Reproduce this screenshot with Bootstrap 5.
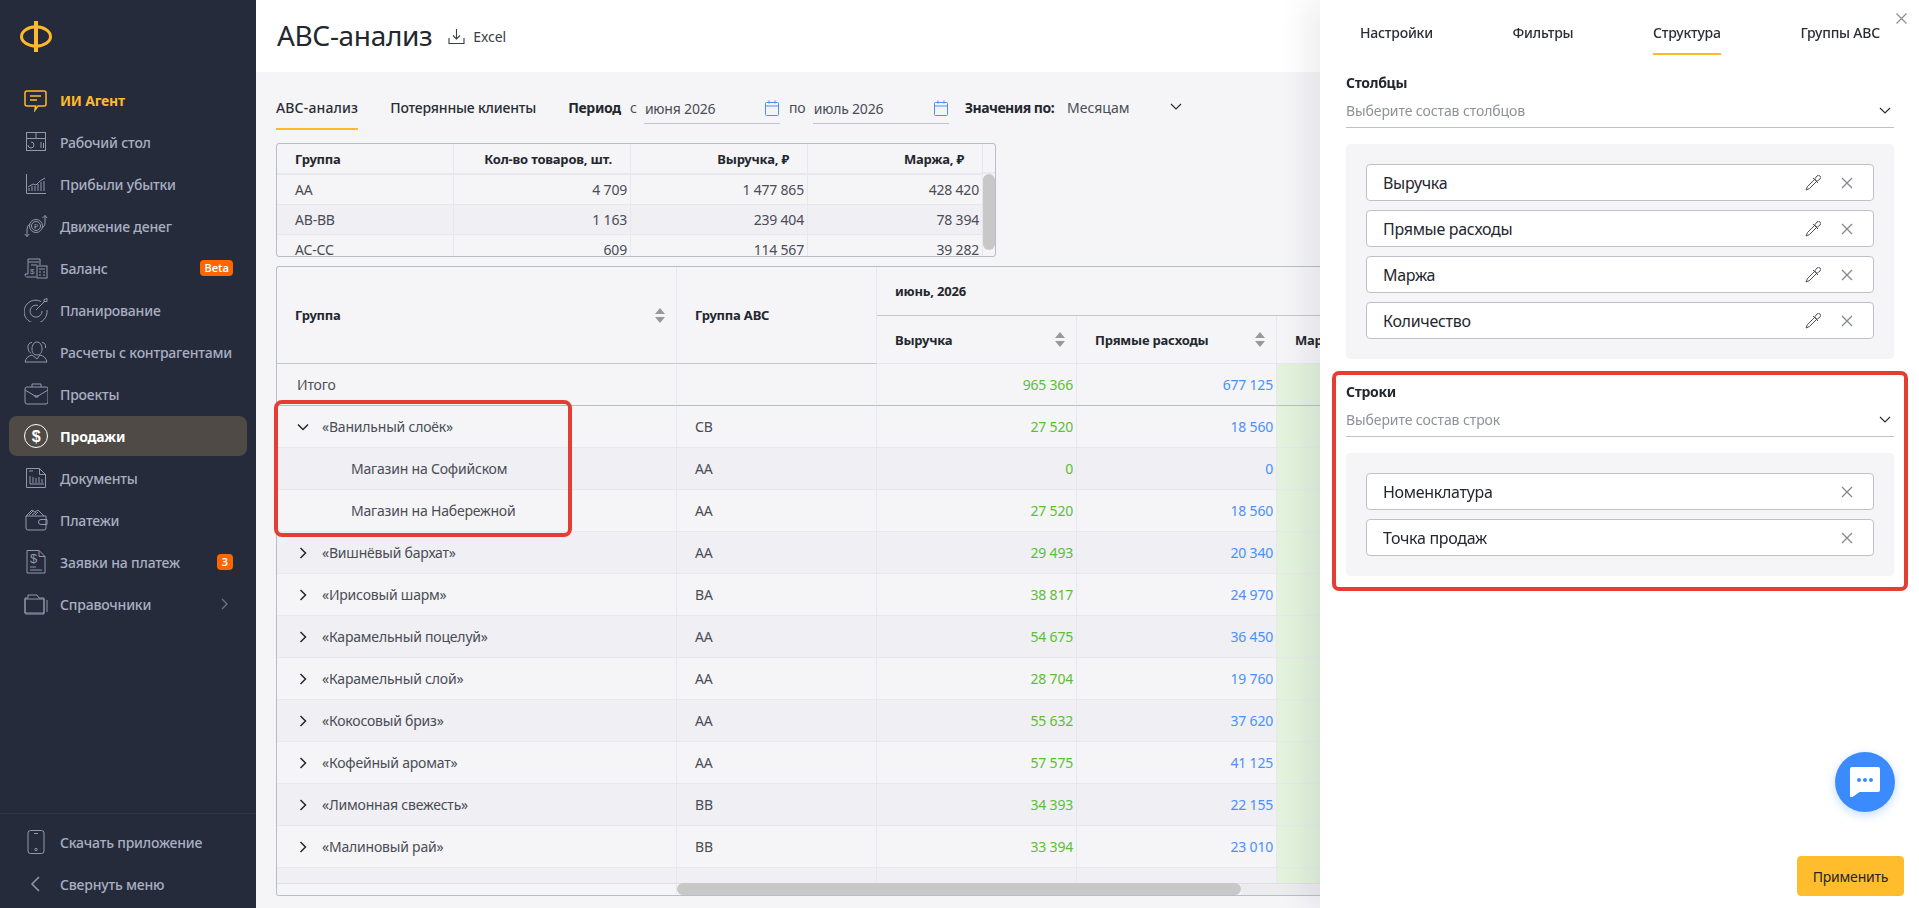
<!DOCTYPE html>
<html lang="ru">
<head>
    <meta charset="UTF-8">
    <meta name="viewport" content="width=device-width, initial-scale=1.0">
    <title>ABC-анализ</title>
    <link href="https://cdn.jsdelivr.net/npm/bootstrap@5.3.0/dist/css/bootstrap.min.css" rel="stylesheet">
    <style>
        html, body { height: 100%; }
        body {
            font-family: "Noto Sans", Roboto, sans-serif;
            font-size: 14px;
            color: #24272e;
            background: #f5f5f8;
            overflow: hidden;
        }
        /* sidebar */
        .side {
            width: 256px;
            height: 908px;
            background: #252b3a;
            flex: none;
        }
        .side-logo { height: 80px; padding: 21px 0 0 20px; }
        .side-list { padding: 0 9px; }
        .side-link {
            height: 40px;
            margin-bottom: 2px;
            padding: 0 14px 0 15px;
            border-radius: 8px;
            color: #a9afc2;
            font-weight: 500;
            letter-spacing: -.2px;
            text-decoration: none;
        }
        .side-link.agent { color: #ffb92a; font-weight: 700; }
        .side-link.active { background: #4f4a45; color: #fff; font-weight: 700; }
        .side-ico { width: 24px; height: 24px; margin-right: 12px; flex: none; fill: none; stroke: #9299ab; stroke-width: 1; }
        .side-link.agent .side-ico { stroke: #ffb92a; stroke-width: 1.5; }
        .side-link.active .side-ico { stroke: #fff; }
        .side-ico text { font-family: "Liberation Sans", sans-serif; stroke: none; fill: #9299ab; }
        .side-link.active .side-ico text { fill: #fff; }
        .side-tag {
            margin-left: auto;
            background: #ff6600;
            color: #fff;
            height: 16px;
            min-width: 16px;
            padding: 0 4px;
            border-radius: 4px;
            font-size: 11px;
            font-weight: 600;
            line-height: 16px;
            letter-spacing: 0;
            text-align: center;
        }
        .side-foot { margin-top: auto; padding-top: 8px; padding-bottom: 2px; border-top: 1px solid #30364a; }
        /* main part */
        .work { flex: 1; min-width: 0; height: 908px; }
        .work-head { height: 72px; background: #fff; padding-left: 21px; }
        .work-head h1 { font-size: 28px; font-weight: 400; margin: 0 16px 0 0; letter-spacing: -.35px; }
        .excel-link { color: #3a3d45; font-size: 14px; letter-spacing: -.1px; }
        .work-body { padding: 16px 0 0 20px; }
        .tab-line { height: 42px; }
        .tab-item {
            padding: 10px 0;
            height: 42px;
            line-height: 20px;
            border-bottom: 2px solid transparent;
            margin-right: 32px;
            font-weight: 500;
            letter-spacing: -.18px;
            color: #2a2d35;
        }
        .tab-item.on { border-bottom-color: #ffb92a; letter-spacing: .15px; }
        .fld-label { margin-top: 10px; line-height: 20px; font-weight: 700; letter-spacing: -.3px; }
        .fld-label.by-label { margin-left: 16px; letter-spacing: -.5px; }
        .fld-word { margin: 10px 7px 0 9px; line-height: 20px; color: #4a4d55; }
        .fld-word.by-value { margin-left: 13px; }
        .by-chev { margin: 15px 0 0 34px; }
        .fld-date {
            width: 136px;
            height: 31px;
            margin-top: 5px;
            border-bottom: 1px solid #c2c4cd;
            padding: 0 1px;
            color: #4a4d55;
            letter-spacing: -.2px;
        }
        .frame {
            border: 1px solid #b9bdca;
            border-radius: 3px;
            overflow: hidden;
        }
        .mini-frame { width: 720px; height: 114px; margin-top: 13px; }
        .vbar { width: 13px; flex: none; border-left: 1px solid #e6e7ec; }
        .vbar-top { height: 30px; border-bottom: 2px solid #e9eaef; }
        .vbar-thumb { width: 12px; height: 76px; background: #c8c8c8; border-radius: 6px; }
        .grid-holder { position: relative; margin-top: 9px; }
        .grid-frame { height: 630px; border-right: 0; border-radius: 3px 0 0 3px; }
        .grid-clip { flex: 1; overflow: hidden; min-height: 0; }
        .abc-grid {
            table-layout: fixed;
            border-collapse: separate;
            border-spacing: 0;
            margin: 0;
            --bs-table-bg: transparent;
        }
        .abc-grid > :not(caption) > * > * {
            padding: 0 3px 0 18px;
            border-bottom: 1px solid #e7e8ed;
            border-right: 1px solid #e7e8ed;
            color: #4a4d55;
            background: transparent;
            box-shadow: none;
            vertical-align: middle;
            line-height: 18px;
            letter-spacing: -.2px;
        }
        .abc-grid > thead > tr > th { color: #24272e; font-size: 13px; font-weight: 700; padding-right: 12px; letter-spacing: -.2px; }
        .abc-grid > tbody > tr > .num { text-align: right; }
        .abc-grid > thead > tr > .num { text-align: right; padding-right: 18px; }
        .big-grid > tbody > tr:nth-child(odd) > * { background: #efeff4; }
        .mini-grid > tbody > tr:nth-child(even) > * { background: #efeff4; }
        .big-grid > tbody > tr.sum-row > * { background: transparent; }
        .abc-grid > tbody > tr > td.pos { color: #5ac034; }
        .abc-grid > tbody > tr > td.neg { color: #4a90ff; }
        .big-grid > tbody > tr > td.mrg { background: #e2f2dc; }
        .big-grid td { height: 42px; }
        .big-grid tr.sum-row td { border-bottom: 1px solid #b9bdca; }
        .big-grid tr.sum-row td:first-child { padding-left: 20px; }
        .big-grid tr.first-head th { height: 49px; border-bottom: 1px solid #c4c6cf; }
        .big-grid tr.second-head th { height: 48px; }
        .big-grid th.group-head { border-bottom: 1px solid #e7e8ed; }
        .sort-wrap { display: flex; align-items: center; justify-content: space-between; }
        .sort-mark { width: 10px; height: 15px; flex: none; fill: #999; margin-right: -1px; }
        .row-open { width: 12px; height: 12px; margin: 0 13px 0 0; fill: none; stroke: #24272e; stroke-width: 1.5; vertical-align: -1px; }
        .row-name { padding-left: 2px; }
        .child-name { padding-left: 56px; }
        .mini-grid th { height: 31px; border-bottom-width: 2px !important; }
        .mini-grid td { height: 30px; }
        .hbar { height: 12px; flex: none; background: #f5f5f8; border-top: 1px solid #dfe0e6; }
        .hbar-gap { width: 400px; flex: none; border-right: 1px solid #e7e8ed; }
        .hbar-thumb { width: 564px; height: 12px; flex: none; margin-top: -1px; background: #c8c8c8; border-radius: 6px; }
        .hbar-rest { flex: 1; background: #ececef; }
        .mark-box { position: absolute; border: 4px solid #e53d33; border-radius: 8px; pointer-events: none; left: -2px; top: 134px; width: 298px; height: 137px; }
        /* right panel */
        .sheet {
            position: fixed;
            top: 0;
            right: 0;
            bottom: 0;
            width: 599px;
            background: #fff;
            box-shadow: -12px 0 30px rgba(30, 30, 50, .08);
            padding: 0 25px 0 26px;
        }
        .sheet-close { position: absolute; top: 13px; right: 12px; width: 11px; height: 11px; stroke: #8b8e97; stroke-width: 1.2; }
        .sheet-tabs { padding: 0 14px; }
        .sheet-tab { padding: 23px 0 10px; height: 55px; line-height: 20px; border-bottom: 2px solid transparent; font-weight: 500; letter-spacing: -.22px; color: #2a2d35; }
        .sheet-tab.on { border-bottom-color: #ffb92a; }
        .sect-title { font-weight: 700; line-height: 20px; letter-spacing: -.3px; margin-top: 18px; }
        .pick-line { height: 35px; padding: 1px 3px 0 0; border-bottom: 1px solid #bfc1c9; color: #8f9199; letter-spacing: -.1px; }
        .pick-chev { width: 12px; height: 8px; fill: none; stroke: #2b2e36; stroke-width: 1.2; }
        .slot-box { margin-top: 16px; padding: 20px 20px 11px; background: #f5f5f7; border-radius: 4px; }
        .slot-item {
            height: 37px;
            margin-bottom: 9px;
            padding: 0 20px 0 16px;
            background: #fff;
            border: 1px solid #bfc1c9;
            border-radius: 4px;
            font-size: 16px;
            color: #24272e;
            letter-spacing: -.3px;
        }
        .slot-x { width: 12px; height: 12px; margin-left: 20px; stroke: #85888f; stroke-width: 1.3; flex: none; }
        .slot-pen { width: 16px; height: 16px; fill: none; stroke: #4c4f57; stroke-width: 1; flex: none; }
        .mark-zone { margin: 12px -14px 0; padding: 7px 10px 11px; border: 4px solid #e53d33; border-radius: 7px; }
        .mark-zone .sect-title { margin-top: 0; }
        .sheet-foot { margin-top: auto; padding-bottom: 12px; margin-right: -10px; }
        .apply-btn { width: 107px; height: 40px; background: #ffbd2e; border-color: #ffbd2e; color: #24272e; font-size: 14px; letter-spacing: -.2px; border-radius: 4px; padding: 0; }
        .chat-fab {
            position: fixed;
            top: 752px;
            right: 24px;
            width: 60px;
            height: 60px;
            background: #3b8bff;
            border-radius: 50%;
            box-shadow: 0 3px 10px rgba(59, 139, 255, .3);
        }
    </style>
</head>
<body>
<div class="d-flex">

    <!-- Sidebar -->
    <nav class="side d-flex flex-column">
        <div class="side-logo">
            <svg width="32" height="31" viewBox="0 0 32 31"><ellipse cx="16" cy="15.500" rx="14.500" ry="9.700" fill="none" stroke="#ffb92a" stroke-width="3"/><rect x="14" y="0" width="4" height="31" fill="#ffb92a"/></svg>
        </div>
        <div class="side-list">
            <a class="side-link agent d-flex align-items-center" href="#">
                <svg class="side-ico" viewBox="0 0 24 24"><path d="M3 3h17a2 2 0 0 1 2 2v11a2 2 0 0 1-2 2h-6l-3 4 .5-4H3a2 2 0 0 1-2-2V5a2 2 0 0 1 2-2z"/><path d="M6 8h11M6 12h7"/></svg>ИИ Агент</a>
            <a class="side-link d-flex align-items-center" href="#">
                <svg class="side-ico" viewBox="0 0 24 24"><rect x="2.500" y="2.500" width="19" height="18"/><path d="M2.500 8.500h19M12 2.500v6M17 12v6M19.500 13v5M7 12a3 3 0 1 1-3 3"/></svg>Рабочий стол</a>
            <a class="side-link d-flex align-items-center" href="#">
                <svg class="side-ico" viewBox="0 0 24 24"><path d="M2.500 2v19.500H22M5 19v-3M8 19v-5M11 19v-5M14 19v-7M17 19v-9M20 19V9M4 15l5-3 3 1 4-4 5-3"/></svg>Прибыли убытки</a>
            <a class="side-link d-flex align-items-center" href="#">
                <svg class="side-ico" viewBox="0 0 24 24"><circle cx="12" cy="12" r="6.500"/><circle cx="12" cy="12" r="4.500"/><text x="12" y="14.500" font-size="7" text-anchor="middle">₽</text><path d="M21 8V1.500M18.500 4 21 1.500 23 4M3 16v6.500M.8 20 3 22.500 5.300 20M3 16c0-3 1-5 3-6M21 8c0 3-1 5-3 6"/></svg>Движение денег</a>
            <a class="side-link d-flex align-items-center justify-content-start" href="#">
                <svg class="side-ico" viewBox="0 0 24 24"><path d="M4 3h12v6M4 3v15H1c0 2 1 3 2 3h9M4 6h11M7 9h6"/><text x="8" y="18" font-size="8" text-anchor="middle">$</text><rect x="13" y="10" width="10" height="12"/><path d="M15 13h6M15 16h2M19 16h2M15 19h2M19 19h2"/></svg>Баланс<span class="side-tag">Beta</span></a>
            <a class="side-link d-flex align-items-center" href="#">
                <svg class="side-ico" viewBox="0 0 24 24"><path d="M17 3.500A11.500 11.500 0 1 0 23 12M14 7.500A6 6 0 1 0 18 13"/><path d="M12 12l8-8M20 4V1.500l3-1v3h-3"/></svg>Планирование</a>
            <a class="side-link d-flex align-items-center" href="#">
                <svg class="side-ico" viewBox="0 0 24 24"><path d="M8 9c0-4 2-7 5-7s5 3 5 7-2 6-5 6-5-2-5-6zM8 15c-4 1-6 3-7 7h22c-1-4-3-6-7-7M8 15l5 4 3-4M8 2.500C5 2.500 3.500 5 4 8s1 4 3 5M18 2.500c3 0 4 2.500 3.500 5.500"/></svg>Расчеты с контрагентами</a>
            <a class="side-link d-flex align-items-center" href="#">
                <svg class="side-ico" viewBox="0 0 24 24"><rect x="1" y="5" width="23" height="17" rx="2"/><path d="M8 5V2h9v3M1 8l10 6h3l10-6M11 13v2h3v-2"/></svg>Проекты</a>
            <a class="side-link active d-flex align-items-center" href="#">
                <svg class="side-ico" viewBox="0 0 24 24"><circle cx="12" cy="12" r="11.500"/><text x="12" y="17.500" font-size="16" text-anchor="middle">$</text></svg>Продажи</a>
            <a class="side-link d-flex align-items-center" href="#">
                <svg class="side-ico" viewBox="0 0 24 24"><path d="M2.500 2.500h13l6 6v13h-19zM15.500 2.500v6h6M5 5h4M6 10v8h14M9 17V11M12 17V12M15 17V11M18 17V13"/></svg>Документы</a>
            <a class="side-link d-flex align-items-center" href="#">
                <svg class="side-ico" viewBox="0 0 24 24"><path d="M2 8v12a2 2 0 0 0 2 2h16a2 2 0 0 0 2-2V8H2zM22 11.500h-5a2 2 0 0 0 0 5h6v-5zM2 8l6-6 3 2 3-2 6 6M5 7l4-4M8 7l4-3M11 7l3-3"/></svg>Платежи</a>
            <a class="side-link d-flex align-items-center" href="#">
                <svg class="side-ico" viewBox="0 0 24 24"><path d="M3 .5h12l6 6V23H3zM15 .5v6h6M6 17h6M6 20h12"/><text x="9.500" y="13" font-size="13" text-anchor="middle">$</text></svg>Заявки на платеж<span class="side-tag">3</span></a>
            <a class="side-link d-flex align-items-center" href="#">
                <svg class="side-ico" viewBox="0 0 24 24"><path d="M1 21V6h3V3h9l2 3h5v15zM1 7h19v15H2a1 1 0 0 1-1-1zM23 8v12"/></svg>Справочники
                <svg class="ms-auto me-1" width="8" height="12" viewBox="0 0 8 12" fill="none" stroke="#70778a" stroke-width="1.200"><path d="M1 1l5 5-5 5"/></svg></a>
        </div>
        <div class="side-foot side-list">
            <a class="side-link d-flex align-items-center" href="#">
                <svg class="side-ico" viewBox="0 0 24 24"><rect x="4" y="0.500" width="16" height="23" rx="2.500"/><path d="M10 3.500h4"/><circle cx="12" cy="19.500" r="1.200"/></svg>Скачать приложение</a>
            <a class="side-link d-flex align-items-center" href="#">
                <svg class="side-ico" viewBox="0 0 24 24" style="stroke-width:1.500"><path d="M15 5l-7 7 7 7"/></svg>Свернуть меню</a>
        </div>
    </nav>

    <!-- Main content -->
    <main class="work">
        <div class="work-head d-flex align-items-center">
            <h1>АВС-анализ</h1>
            <svg class="me-2" width="17" height="17" viewBox="0 0 17 17" fill="none" stroke="#3a3d45" stroke-width="1.100"><path d="M8.500 1v10M5 7.500l3.500 3.500L12 7.500M1 10v5.500h15V10"/></svg>
            <span class="excel-link">Excel</span>
        </div>

        <div class="work-body">
            <div class="tab-line d-flex align-items-start">
                <div class="tab-item on">АВС-анализ</div>
                <div class="tab-item">Потерянные клиенты</div>
                <div class="fld-label">Период</div>
                <div class="fld-word">с</div>
                <div class="fld-date d-flex align-items-center justify-content-between">июня 2026
                    <svg width="14" height="16" viewBox="0 0 14 16" fill="none" stroke="#4a8ff7" stroke-width="1"><rect x=".5" y="2.500" width="13" height="13" rx="1"/><path d="M.5 6h13M4 .5v3M10 .5v3"/></svg>
                </div>
                <div class="fld-word">по</div>
                <div class="fld-date d-flex align-items-center justify-content-between">июль 2026
                    <svg width="14" height="16" viewBox="0 0 14 16" fill="none" stroke="#4a8ff7" stroke-width="1"><rect x=".5" y="2.500" width="13" height="13" rx="1"/><path d="M.5 6h13M4 .5v3M10 .5v3"/></svg>
                </div>
                <div class="fld-label by-label">Значения по:</div>
                <div class="fld-word by-value">Месяцам</div>
                <svg class="by-chev" width="12" height="8" viewBox="0 0 12 8" fill="none" stroke="#2b2e36" stroke-width="1.200"><path d="M1 1l5 5 5-5"/></svg>
            </div>

            <!-- Summary by group -->
            <div class="frame mini-frame d-flex">
                <div class="flex-grow-1 overflow-hidden">
                    <table class="table abc-grid mini-grid" style="width:706px">
                        <colgroup><col style="width:177px"><col style="width:177px"><col style="width:177px"><col style="width:175px"></colgroup>
                        <thead><tr><th>Группа</th><th class="num">Кол-во товаров, шт.</th><th class="num">Выручка, ₽</th><th class="num">Маржа, ₽</th></tr></thead>
                        <tbody id="miniRows"></tbody>
                    </table>
                </div>
                <div class="vbar"><div class="vbar-top"></div><div class="vbar-thumb"></div></div>
            </div>

            <!-- Main grid -->
            <div class="grid-holder">
                <div class="frame grid-frame d-flex flex-column">
                    <div class="grid-clip">
                        <table class="table abc-grid big-grid" style="width:1400px">
                            <colgroup><col style="width:400px"><col style="width:200px"><col style="width:200px"><col style="width:200px"><col style="width:400px"></colgroup>
                            <thead>
                                <tr class="first-head">
                                    <th rowspan="2" class="group-head"><div class="sort-wrap">Группа<svg class="sort-mark" viewBox="0 0 10 15"><path d="M5 0l5 6H0zM5 15l5-6H0z"/></svg></div></th>
                                    <th rowspan="2" class="group-head">Группа АВС</th>
                                    <th colspan="3">июнь, 2026</th>
                                </tr>
                                <tr class="second-head">
                                    <th><div class="sort-wrap">Выручка<svg class="sort-mark" viewBox="0 0 10 15"><path d="M5 0l5 6H0zM5 15l5-6H0z"/></svg></div></th>
                                    <th><div class="sort-wrap">Прямые расходы<svg class="sort-mark" viewBox="0 0 10 15"><path d="M5 0l5 6H0zM5 15l5-6H0z"/></svg></div></th>
                                    <th>Маржа</th>
                                </tr>
                            </thead>
                            <tbody id="bigRows"></tbody>
                        </table>
                    </div>
                    <div class="hbar d-flex">
                        <div class="hbar-gap"></div>
                        <div class="hbar-thumb"></div>
                        <div class="hbar-rest"></div>
                    </div>
                </div>
                <div class="mark-box"></div>
            </div>
        </div>
    </main>
</div>

<!-- Settings panel -->
<aside class="sheet d-flex flex-column">
    <svg class="sheet-close" viewBox="0 0 11 11"><path d="M.5.500l10 10M10.500.500l-10 10"/></svg>
    <div class="sheet-tabs d-flex justify-content-between">
        <div class="sheet-tab">Настройки</div>
        <div class="sheet-tab">Фильтры</div>
        <div class="sheet-tab on">Структура</div>
        <div class="sheet-tab">Группы АВС</div>
    </div>

    <div class="sect-title">Столбцы</div>
    <div class="pick-line d-flex align-items-center justify-content-between">Выберите состав столбцов
        <svg class="pick-chev" viewBox="0 0 12 8"><path d="M1 1l5 5 5-5"/></svg>
    </div>
    <div class="slot-box" id="columnSlots"></div>

    <div class="mark-zone">
        <div class="sect-title">Строки</div>
        <div class="pick-line d-flex align-items-center justify-content-between">Выберите состав строк
            <svg class="pick-chev" viewBox="0 0 12 8"><path d="M1 1l5 5 5-5"/></svg>
        </div>
        <div class="slot-box" id="rowSlots"></div>
    </div>

    <div class="sheet-foot d-flex justify-content-end">
        <button type="button" class="btn apply-btn">Применить</button>
    </div>
</aside>

<div class="chat-fab d-flex align-items-center justify-content-center">
    <svg width="30" height="30" viewBox="0 0 30 30"><path d="M2 0h26a2 2 0 0 1 2 2v21a2 2 0 0 1-2 2H9.500l-7 5a1.500 1.500 0 0 1-2.500-1V2a2 2 0 0 1 2-2z" fill="#fff"/><circle cx="9" cy="13" r="2" fill="#3b8bff"/><circle cx="15" cy="13" r="2" fill="#3b8bff"/><circle cx="21" cy="13" r="2" fill="#3b8bff"/></svg>
</div>

<script src="https://cdn.jsdelivr.net/npm/bootstrap@5.3.0/dist/js/bootstrap.bundle.min.js"></script>
<script>
    const miniData = [
        ['АА', '4 709', '1 477 865', '428 420'],
        ['АВ-ВВ', '1 163', '239 404', '78 394'],
        ['АС-СС', '609', '114 567', '39 282']
    ];

    // [name, abc group, revenue, costs, level]
    const bigData = [
        ['«Ванильный слоёк»', 'СВ', '27 520', '18 560', 'open'],
        ['Магазин на Софийском', 'АА', '0', '0', 'child'],
        ['Магазин на Набережной', 'АА', '27 520', '18 560', 'child'],
        ['«Вишнёвый бархат»', 'АА', '29 493', '20 340', 'shut'],
        ['«Ирисовый шарм»', 'ВА', '38 817', '24 970', 'shut'],
        ['«Карамельный поцелуй»', 'АА', '54 675', '36 450', 'shut'],
        ['«Карамельный слой»', 'АА', '28 704', '19 760', 'shut'],
        ['«Кокосовый бриз»', 'АА', '55 632', '37 620', 'shut'],
        ['«Кофейный аромат»', 'АА', '57 575', '41 125', 'shut'],
        ['«Лимонная свежесть»', 'ВВ', '34 393', '22 155', 'shut'],
        ['«Малиновый рай»', 'ВВ', '33 394', '23 010', 'shut']
    ];

    const arrows = {
        open: '<svg class="row-open" viewBox="0 0 12 12"><path d="M1 3.500l5 5 5-5"/></svg>',
        shut: '<svg class="row-open" viewBox="0 0 12 12"><path d="M3.500 1l5 5-5 5"/></svg>'
    };
    const xMark = '<svg class="slot-x" viewBox="0 0 12 12"><path d="M1 1l10 10M11 1L1 11"/></svg>';
    const pen = '<svg class="slot-pen" viewBox="0 0 16 16"><path d="M9.500 4.500L2.500 11.500 1 15l3.500-1.500 7-7"/><path d="M8 3l5 5"/><path d="M10.500 5.500l-.5-2 2-2.500a2 2 0 0 1 3 3l-2.500 2-2-.5"/></svg>';

    function slot(name, withPen) {
        return `<div class="slot-item d-flex align-items-center"><span class="me-auto">${name}</span>${withPen ? pen : ''}${xMark}</div>`;
    }

    document.getElementById('miniRows').innerHTML = miniData.map(r => `
        <tr><td>${r[0]}</td><td class="num">${r[1]}</td><td class="num">${r[2]}</td><td class="num">${r[3]}</td></tr>`).join('');

    let bigHtml = `<tr class="sum-row"><td>Итого</td><td></td><td class="num pos">965 366</td><td class="num neg">677 125</td><td class="mrg"></td></tr>`;
    bigData.forEach(r => {
        const name = r[4] === 'child'
            ? `<span class="child-name">${r[0]}</span>`
            : `<span class="row-name">${arrows[r[4]]}${r[0]}</span>`;
        bigHtml += `<tr><td>${name}</td><td>${r[1]}</td><td class="num pos">${r[2]}</td><td class="num neg">${r[3]}</td><td class="mrg"></td></tr>`;
    });
    bigHtml += `<tr><td></td><td></td><td></td><td></td><td class="mrg"></td></tr>`;
    document.getElementById('bigRows').innerHTML = bigHtml;

    document.getElementById('columnSlots').innerHTML = ['Выручка', 'Прямые расходы', 'Маржа', 'Количество'].map(n => slot(n, true)).join('');
    document.getElementById('rowSlots').innerHTML = ['Номенклатура', 'Точка продаж'].map(n => slot(n, false)).join('');
</script>
</body>
</html>
